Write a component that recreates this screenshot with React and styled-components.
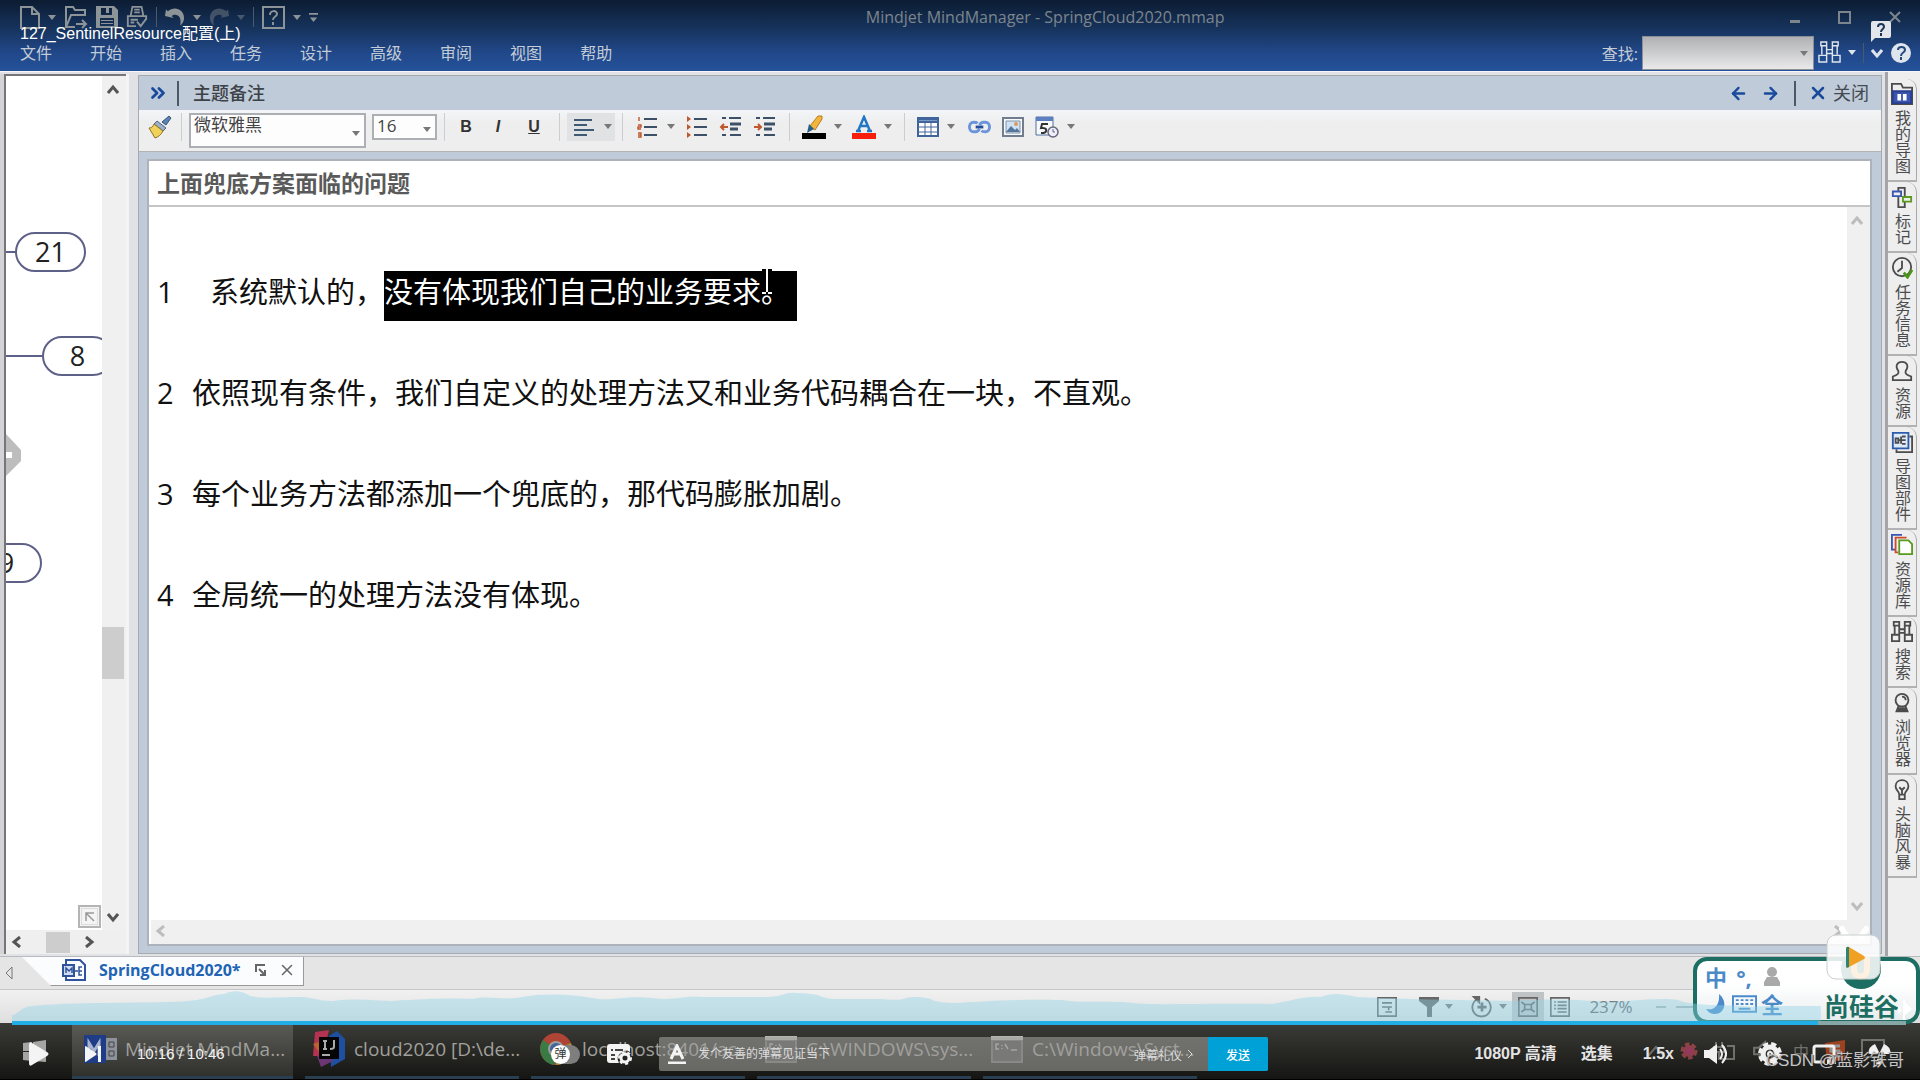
import React from 'react';
import styled, { createGlobalStyle, css } from 'styled-components';
import { ArrowLeft, ArrowRight, ChevronsRight, X } from 'lucide-react';

const sans = '"Open Sans", "Noto Sans CJK SC", sans-serif';
const arial = '"Liberation Sans", "Noto Sans CJK SC", sans-serif';

const GlobalStyle = createGlobalStyle`
  *, *::before, *::after { box-sizing: border-box; }
  body { margin: 0; font-family: ${sans}; background: #000; }
  button, input, select { font: inherit; margin: 0; border-radius: 0; }
  button { background: none; border: none; padding: 0; color: inherit; display: flex; align-items: center; justify-content: center; }
  a { color: inherit; text-decoration: none; }
  svg { display: block; flex: none; }
  p, h1, h2 { margin: 0; font-weight: 400; }
`;

const Screen = styled.div`
  position: relative;
  display: flex;
  flex-direction: column;
  height: 100vh;
  overflow: hidden;
  background: #e9e9ea;
`;

const Caret = styled.span`
  flex: none;
  width: 0;
  height: 0;
  border: 4px solid transparent;
  border-top: 5px solid ${({ $color }) => $color || '#777'};
  border-bottom: 0;
`;

const Spacer = styled.div`
  flex: 1;
`;

/* header */

const Header = styled.header`
  position: relative;
  flex: none;
  height: 71px;
  padding: 0 8px 0 20px;
  background: linear-gradient(#0c1c32 0%, #16335c 40%, #21488a 75%, #24529a 100%);
  color: #c3ccd6;
`;

const TitleRow = styled.div`
  display: flex;
  align-items: center;
  height: 34px;
  color: #7d858c;
`;

const QuickTools = styled.div`
  flex: 5;
  display: flex;
  align-items: center;
  gap: 8px;
  color: #8d9498;
`;

const QuickDivider = styled.span`
  width: 1px;
  height: 20px;
  background: #4b596b;
`;

const AppTitle = styled.h1`
  font-size: 16px;
  line-height: 24px;
`;

const WindowButtons = styled.div`
  flex: 4;
  display: flex;
  justify-content: flex-end;
  align-items: center;
  gap: 38px;
  padding-right: 11px;
`;

const MenuRow = styled.div`
  display: flex;
  align-items: center;
  height: 37px;
`;

const Menu = styled.nav`
  display: flex;
  gap: 38px;
  font-size: 16px;
  line-height: 24px;
`;

const Search = styled.div`
  display: flex;
  align-items: center;
  gap: 4px;
  font-size: 16px;
`;

const SearchBox = styled.span`
  position: relative;
  display: flex;
  input {
    width: 172px;
    height: 34px;
    border: 1px solid #8a8f99;
    background: linear-gradient(#b0b1b3, #e9e9ea);
  }
  ${Caret} {
    position: absolute;
    right: 6px;
    top: 15px;
  }
`;

const HeaderTools = styled.div`
  display: flex;
  align-items: center;
  gap: 7px;
  margin-left: 4px;
  color: #dfe5ec;
`;

/* body */

const Body = styled.div`
  flex: 1;
  display: flex;
  min-height: 0;
  border-top: 1px solid #f7f7f7;
  background: #e1e2e5;
`;

const MapPane = styled.section`
  display: flex;
  flex-direction: column;
  flex: none;
  width: 129px;
  margin: 2px 9px 2px 0;
  border-left: 4px solid #d4d4d6;
  border-right: 3px solid #f4f4f5;
  background: #efefef;
`;

const MapMain = styled.div`
  flex: 1;
  display: flex;
  border-left: 2px solid #77757a;
  border-top: 2px solid #77757a;
`;

const MapCanvas = styled.div`
  position: relative;
  flex: 1;
  overflow: hidden;
  background: #fff;
`;

const Bubble = styled.div`
  position: absolute;
  left: ${({ $x }) => $x}px;
  top: ${({ $y }) => $y}px;
  width: 71px;
  height: 40px;
  border: 2px solid #5f6088;
  border-radius: 20px;
  background: #fff;
  color: #222;
  font-size: 27px;
  line-height: 35px;
  text-align: center;
  &::before {
    content: '';
    position: absolute;
    right: 100%;
    top: 17px;
    width: 40px;
    height: 2px;
    background: #5f6088;
  }
`;

const MapHandle = styled.svg`
  position: absolute;
  left: 0;
  top: 358px;
`;

const FitButton = styled.button`
  position: absolute;
  right: 1px;
  bottom: 2px;
  width: 23px;
  height: 23px;
  border: 2px solid #b4b4b4;
  outline: 1px solid #dcdcdc;
  outline-offset: -4px;
  background: #f4f4f4;
  color: #999;
`;

const VScroll = styled.div`
  display: flex;
  flex-direction: column;
  align-items: center;
  width: ${({ $w }) => $w}px;
  padding: ${({ $pad }) => $pad || '8px 0'};
  background: #f0f0f0;
  color: ${({ $muted }) => ($muted ? '#bdbdbd' : '#555')};
`;

const VThumb = styled.div`
  width: 22px;
  height: 52px;
  margin-top: auto;
  margin-bottom: 232px;
  background: #cdcdcd;
`;

const MapHScroll = styled.div`
  display: flex;
  align-items: center;
  gap: 23px;
  height: 24px;
  padding-left: 5px;
  border-left: 2px solid #77757a;
  color: #555;
  i {
    width: 24px;
    height: 21px;
    margin-right: -10px;
    background: #cdcdcd;
  }
`;

const NotesPanel = styled.section`
  flex: 1;
  min-width: 0;
  display: flex;
  flex-direction: column;
  margin: 3px 3px 2px 0;
  border: 1px solid #a6a9ae;
  background: #bfcbd8;
`;

const PanelHead = styled.div`
  display: flex;
  align-items: center;
  height: 34px;
  padding: 0 12px 0 8px;
  color: #1a4a9c;
`;

const PanelTitle = styled.h2`
  font-size: 18px;
  line-height: 26px;
  font-weight: 500;
  color: #3d4248;
`;

const HeadRule = styled.span`
  width: 2px;
  height: 25px;
  margin: 0 ${({ $after }) => $after}px 0 8px;
  background: #4e5863;
`;

const CloseButton = styled.button`
  gap: 5px;
  font-size: 18px;
  line-height: 26px;
  span {
    color: #444a52;
  }
`;

const NavButton = styled.button`
  width: 32px;
`;

const Toolbar = styled.div`
  display: flex;
  align-items: center;
  height: 42px;
  padding-left: 7px;
  padding-bottom: 8px;
  border-bottom: 1px solid #b1b3b6;
  background: linear-gradient(#f3f5f8, #eee 30%);
`;

const ToolRule = styled.span`
  width: 1px;
  height: 28px;
  margin: 0 7px;
  background: #cbcdd0;
`;

const ToolButton = styled.button`
  width: ${({ $w }) => $w || 34}px;
  height: 26px;
  color: #333;
  font: bold 16px/22px ${arial};
`;

const DropButton = styled.button`
  gap: 8px;
  justify-content: flex-start;
  width: 50px;
  height: 28px;
  padding-left: 5px;
  ${({ $active }) => $active && css`
    width: 48px;
    background: #e0e2e4;
  `}
`;

const Combo = styled.span`
  position: relative;
  align-self: flex-start;
  display: flex;
  margin-top: ${({ $top }) => $top}px;
  margin-right: ${({ $gap }) => $gap || 0}px;
  select {
    appearance: none;
    width: ${({ $w }) => $w}px;
    height: ${({ $h }) => $h}px;
    padding: 0 0 ${({ $lift }) => $lift || 0}px 3px;
    border: 2px solid #acafb4;
    background: #fdfdfd;
    color: #444;
    font-size: 17px;
    line-height: 20px;
  }
  ${Caret} {
    position: absolute;
    right: 6px;
    top: 50%;
  }
`;

const Editor = styled.div`
  flex: 1;
  display: flex;
  flex-direction: column;
  min-height: 0;
  margin: 7px 9px 7px 8px;
  border: 2px solid #aeb2ba;
  background: #fff;
`;

const NoteTitle = styled.h2`
  height: 46px;
  padding-left: 8px;
  border-bottom: 2px solid #c6c6c8;
  color: #5a5a5a;
  font-size: 23px;
  font-weight: 700;
  line-height: 44px;
`;

const EditorMain = styled.div`
  flex: 1;
  display: flex;
  margin-left: 2px;
`;

const NoteText = styled.div`
  flex: 1;
  display: flex;
  flex-direction: column;
  gap: 51px;
  padding: 64px 0 0 6px;
  color: #111;
  font-size: 29px;
  line-height: 41px;
`;

const NoteLine = styled.p`
  display: flex;
  height: 50px;
`;

const LineNumber = styled.span`
  width: ${({ $wide }) => ($wide ? 53 : 35)}px;
`;

const Selected = styled.mark`
  position: relative;
  height: 50px;
  padding-right: 7px;
  background: #000;
  color: #fff;
  svg {
    position: absolute;
    right: 24px;
    top: -2px;
  }
`;

const HScroll = styled.div`
  display: flex;
  justify-content: space-between;
  align-items: center;
  height: 24px;
  margin-left: 2px;
  padding: 0 26px 2px 4px;
  background: #f0f0f0;
  color: #bdbdbd;
`;

const SideTabs = styled.aside`
  flex: none;
  width: 35px;
  padding: 7px 3px 0 0;
  border-left: 3px solid #a5a5a9;
  background: #eeeeef;
`;

const SideTab = styled.button`
  width: 29px;
  flex-direction: column;
  justify-content: flex-start;
  gap: 5px;
  padding: 4px 0 6px;
  border-right: 1px solid #aaa;
  border-bottom: 2px solid #b2b2b4;
  border-top-right-radius: 10px;
  color: #4c4c4c;
  font-size: 16px;
  line-height: 20px;
  span {
    writing-mode: vertical-rl;
  }
`;

/* bottom of the app */

const FileTabs = styled.div`
  flex: none;
  display: flex;
  align-items: flex-start;
  height: 34px;
  padding-left: 6px;
  border-bottom: 1px solid #c6c6c8;
  border-top: 1px solid #b9babd;
  background: #e5e5e6;
  color: #777;
`;

const FileTab = styled.div`
  display: flex;
  align-items: center;
  height: 29px;
  width: 282px;
  margin-left: 4px;
  padding: 0 3px 3px 40px;
  background: #fbfcfd;
  border-right: 1px solid #999;
  border-bottom: 1px solid #999;
  clip-path: polygon(0 0, 100% 0, 100% 100%, 29px 100%);
  font-size: 16px;
  line-height: 24px;
  font-weight: 700;
  color: #2163b5;
  a {
    flex: 1;
    margin-left: 13px;
  }
  button {
    width: 26px;
    color: #666;
  }
`;

const StatusBar = styled.footer`
  flex: none;
  display: flex;
  align-items: center;
  justify-content: flex-end;
  height: 33px;
  padding-right: 220px;
  background: linear-gradient(#f1f1f1, #dedede);
  color: #666;
  font-size: 17px;
  line-height: 24px;
`;

const StatusItem = styled.button`
  gap: 6px;
  width: ${({ $w }) => $w || 32}px;
  height: 30px;
  background: ${({ $on }) => ($on ? '#c0c3c5' : 'none')};
`;

const ZoomTrack = styled.span`
  width: ${({ $w }) => $w}px;
  height: 2px;
  margin-left: 10px;
  background: #a9b3b7;
`;

const Taskbar = styled.div`
  flex: none;
  display: flex;
  gap: 12px;
  height: 57px;
  border-bottom: 1px solid #000;
  background: linear-gradient(#3b3b37, #151513);
  color: #a0a09c;
`;

const StartButton = styled.button`
  width: 60px;
  padding-left: 8px;
`;

const Task = styled.a`
  display: flex;
  align-items: center;
  gap: 9px;
  width: 214px;
  margin-top: 2px;
  padding: 0 0 3px 8px;
  border-bottom: 3px solid #2a3f52;
  font-size: 19px;
  line-height: 26px;
  white-space: nowrap;
  ${({ $active }) => $active && css`
    width: 221px;
    padding-left: 12px;
    gap: 7px;
    background: linear-gradient(#5a5a55, #30302d);
  `}
`;

const Tray = styled.div`
  display: flex;
  align-items: center;
  gap: 15px;
  margin-left: auto;
  padding-right: 35px;
  opacity: 0.6;
`;

/* input method bar with the logo */

const ImeBar = styled.div`
  position: absolute;
  right: 0;
  bottom: 56px;
  display: flex;
  justify-content: space-between;
  width: 227px;
  height: 67px;
  padding: 2px 17px 0 5px;
  border: 4px solid #1c6e62;
  border-radius: 14px;
  background: linear-gradient(#fff, #fff 40%, #e9edee);
`;

const ImeKeys = styled.div`
  display: grid;
  grid-template-columns: repeat(3, 28px);
  grid-auto-rows: 27px;
  align-items: center;
  justify-items: center;
  color: #4a8ac9;
  font-size: 22px;
  line-height: 26px;
  font-weight: 700;
`;

const Brand = styled.div`
  display: flex;
  flex-direction: column;
  align-items: center;
  margin-top: -6px;
  color: #1c6e62;
  font-size: 25px;
  line-height: 30px;
  font-weight: 700;
`;

/* video player laid over the recording */

const VideoTitle = styled.div`
  position: absolute;
  left: 20px;
  top: 23px;
  color: #fff;
  font: 16px/22px ${arial};
`;

const Feedback = styled.button`
  position: absolute;
  right: 29px;
  top: 21px;
`;

const TvPlay = styled.button`
  position: absolute;
  right: 38px;
  bottom: 100px;
`;

const Progress = styled.div`
  position: absolute;
  left: 12px;
  right: 14px;
  bottom: 55px;
`;

const Track = styled.div`
  height: 4px;
  background: #86a7a5;
  i {
    display: block;
    height: 4px;
    background: #21ade5;
  }
`;

const Wave = styled.svg`
  width: 95.5%;
  height: 30px;
`;

const Knob = styled.svg`
  position: absolute;
  right: -6px;
  bottom: 3px;
`;

const Controls = styled.div`
  position: absolute;
  left: 0;
  right: 0;
  bottom: 0;
  display: grid;
  grid-template-columns: 551px 717px 1fr;
  align-items: center;
  height: 52px;
  color: #f4f4f4;
  font-family: ${arial};
`;

const Left = styled.div`
  display: flex;
  align-items: center;
  gap: 36px;
  padding-left: 29px;
  font-size: 15px;
  line-height: 20px;
`;

const Middle = styled.div`
  display: flex;
  align-items: center;
  gap: 27px;
`;

const Right = styled.div`
  display: flex;
  align-items: center;
  justify-content: flex-end;
  gap: 30px;
  padding-right: 28px;
  color: #f0f0f0;
`;

const TextButtons = styled.div`
  display: flex;
  gap: 24px;
  font-size: 16px;
  line-height: 22px;
  font-weight: 700;
  color: #e4e4e4;
`;

const Switch = styled.label`
  position: relative;
  display: flex;
  width: 29px;
  height: 19px;
  input {
    appearance: none;
    width: 29px;
    height: 19px;
    border-radius: 10px;
    background: #7e7e7e;
  }
  span {
    position: absolute;
    left: 0;
    top: 0;
    width: 19px;
    height: 19px;
    border-radius: 50%;
    background: #fff;
    color: #333;
    font-size: 12px;
    line-height: 18px;
    text-align: center;
  }
`;

const Danmaku = styled.form`
  flex: 1;
  display: flex;
  align-items: center;
  height: 34px;
  border-radius: 2px;
  overflow: hidden;
  background: rgba(160, 160, 157, 0.58);
  font-size: 12px;
  input {
    flex: 1;
    min-width: 0;
    height: 34px;
    padding: 0 0 0 9px;
    border: none;
    background: none;
    &::placeholder {
      color: #dcdcdc;
    }
  }
  a {
    display: flex;
    align-items: center;
    gap: 5px;
    margin-right: 15px;
    color: #dcdcdc;
  }
`;

const SendButton = styled.button`
  width: 60px;
  height: 34px;
  background: #00a1d6;
  color: #fff;
  font-weight: 500;
`;

const Watermark = styled.div`
  position: absolute;
  right: 16px;
  bottom: 6px;
  color: #c4c4c4;
  font: 17px/26px ${arial};
  text-shadow: 1px 1px 1px #222;
`;

const Line = ({ size = 22, w = 2, children, ...rest }) => (
  <svg width={size} height={size} viewBox="0 0 24 24" fill="none" stroke="currentColor" strokeWidth={w} {...rest}>
    {children}
  </svg>
);

const Angle = ({ dir }) => {
  const paths = {
    up: 'M1 9 6 3l5 6',
    down: 'M1 3l5 6 5-6',
    left: 'M9 1 3 6l6 5',
    right: 'M3 1l6 5-6 5',
  };
  return (
    <svg width="12" height="12" viewBox="0 0 12 12" fill="none" stroke="currentColor" strokeWidth="3">
      <path d={paths[dir]} />
    </svg>
  );
};

const Binoculars = ({ size = 23, w = 2 }) => (
  <Line size={size} w={w}>
    <path d="M3 1h6v4H3zM15 1h6v4h-6zM4 5v9M9 5v17H1v-7h8M20 5v9M15 5v17h8v-7h-8M9 9h6M9 13h6" />
  </Line>
);

const ListIcon = ({ kind }) => (
  <svg width="24" height="24" viewBox="0 0 24 24">
    <g stroke="#3c5068" strokeWidth="2">
      <path d={kind === 'out' || kind === 'in' ? 'M3 3h4M10 3h12M11 20h11M3 20h4' : 'M9 4h13M9 12h13M9 20h13'} />
      {(kind === 'out' || kind === 'in') && <path d="M11 9h11M11 14h8" strokeWidth="3" />}
    </g>
    {kind === 'number' && <path d="M4 2v4M3 10h3v2H3v2h3M3 18h3v4H3M3 20h3" stroke="#c0562c" strokeWidth="1.4" fill="none" />}
    {kind === 'bullet' && <path d="M2 1l4 3-4 3zM2 9l4 3-4 3zM2 17l4 3-4 3z" fill="#c0562c" />}
    {kind === 'out' && <path d="M9 12H2m3-3-3 3 3 3" stroke="#c0562c" strokeWidth="2" fill="none" />}
    {kind === 'in' && <path d="M1 12h7m-3-3 3 3-3 3" stroke="#c0562c" strokeWidth="2" fill="none" />}
  </svg>
);

const CmdIcon = () => (
  <svg width="32" height="27" viewBox="0 0 32 27">
    <path fill="#6a6a68" d="M0 0h32v27H0z" />
    <path fill="#b5b5b3" d="M0 0h32v4H0z" />
    <path fill="#444443" d="M2 5h28v20H2z" />
    <path d="M8 8H5v5h3M11 9v1M11 12v1M14 8l3 5M20 14h6" stroke="#aaa" strokeWidth="1.5" fill="none" />
  </svg>
);

const QuickIcons = () => (
  <QuickTools>
    <svg width="20" height="24" viewBox="0 0 20 24" fill="none" stroke="currentColor" strokeWidth="2">
      <path d="M1 2h11l7 7v14H1zM12 2v7h7" />
    </svg>
    <Caret $color="#8d9498" />
    <svg width="24" height="24" viewBox="0 0 24 24" fill="none" stroke="currentColor" strokeWidth="2">
      <path d="M2 22V2h7l2 3h10v5H7L2 22h9M12 19h10m-4-4 4 4-4 4" />
    </svg>
    <svg width="22" height="22" viewBox="0 0 22 22">
      <path fill="currentColor" fillRule="evenodd" d="M0 0h18l4 4v18H0zM5 2v7h11V2h-3v5h-3V2zM4 12v8h14v-8zM5 14h12v1H5zm0 3h12v1H5z" />
    </svg>
    <svg width="22" height="24" viewBox="0 0 24 24" fill="none" stroke="currentColor" strokeWidth="2">
      <path d="M5 11 7 1h10l2 10M9 4h6M9 7h6M11 22H2V11h20v4M5 15h8M5 18h4M12 17l4 5 6-8" />
    </svg>
    <QuickDivider />
    <svg width="20" height="18" viewBox="0 0 21 18">
      <path fill="currentColor" d="M0 8 1 1l2 2c7-6 17-2 17 7 0 4-2 6-4 8 1-6 0-10-4-11-2-1-4 0-5 1l2 2z" />
    </svg>
    <Caret $color="#8d9498" />
    <svg width="20" height="18" viewBox="0 0 21 18" opacity="0.4">
      <path fill="currentColor" d="M21 8 20 1l-2 2C11-3 1 1 1 10c0 4 2 6 4 8-1-6 0-10 4-11 2-1 4 0 5 1l-2 2z" />
    </svg>
    <Caret $color="#48586c" />
    <QuickDivider />
    <svg width="23" height="23" viewBox="0 0 23 23" fill="none" stroke="currentColor" strokeWidth="2">
      <path d="M1 1h21v21H1zM8 9c0-5 7-5 7-1 0 3-4 2-4 6M11 16v3" />
    </svg>
    <Caret $color="#8d9498" />
    <svg width="9" height="11" viewBox="0 0 10 12" fill="currentColor">
      <path d="M0 1h10v2H0zM1 6h8l-4 5z" />
    </svg>
  </QuickTools>
);

const menuItems = ['文件', '开始', '插入', '任务', '设计', '高级', '审阅', '视图', '帮助'];

const sideTabs = [
  {
    label: '我的导图',
    icon: (
      <Line>
        <path d="M1 23V1h10l2 4h10v18z" />
        <path d="M2 9h20v13H2z" fill="#3a56b0" stroke="#2a3f8d" />
        <path d="M7 12h4v7H7zM13 12h4v7h-4z" fill="#fff" stroke="none" />
      </Line>
    ),
  },
  {
    label: '标记',
    icon: (
      <Line>
        <path d="M8 2h7v21H8z" />
        <path d="M2 6h9v5H2z" fill="#eee" stroke="#3a56b0" />
        <path d="M13 12h9v5h-9z" fill="#eee" stroke="#5a9b1f" />
      </Line>
    ),
  },
  {
    label: '任务信息',
    icon: (
      <Line>
        <circle cx="12" cy="11" r="10" />
        <path d="M12 4v8l-5 4" />
        <path d="m14 17 4 5 5-8" stroke="#4a9416" strokeWidth="3" />
      </Line>
    ),
  },
  {
    label: '资源',
    icon: (
      <Line>
        <path d="M2 22v-4c5-2 7-3 6-6C4 6 7 2 12 2s8 4 4 10c-1 3 1 4 6 6v4z" />
      </Line>
    ),
  },
  {
    label: '导图部件',
    icon: (
      <Line>
        <path d="M20 6h3v17H6v-3" />
        <path d="M2 2h17v17H2z" fill="#dfeaf8" stroke="#2c5cab" />
        <path d="M5 8h3v5H5zM12 6h4M12 10h4M12 14h4M8 10h4M11 6v8" />
      </Line>
    ),
  },
  {
    label: '资源库',
    icon: (
      <Line>
        <path d="M5 17H1V1h11" stroke="#3a56b0" />
        <path d="M8 20H5V4h12" stroke="#d0492c" />
        <path d="M9 7h10l4 4v11H9z" fill="#fff" stroke="#5a9b1f" />
      </Line>
    ),
  },
  { label: '搜索', icon: <Binoculars size={22} /> },
  {
    label: '浏览器',
    icon: (
      <Line>
        <circle cx="12" cy="9" r="7" />
        <path d="M12 5c2 0 4 1 4 4M8 16h8l2 5H6z" />
        <path d="M7 19h10" strokeWidth="4" />
      </Line>
    ),
  },
  {
    label: '头脑风暴',
    icon: (
      <Line>
        <path d="M9 17c0-4-4-4-4-9 0-9 14-9 14 0 0 5-4 5-4 9zM9 17v5h6v-5M9 9l3 3 3-3M12 12v5" />
      </Line>
    ),
  },
];

const notes = [
  { text: '系统默认的，', selected: '没有体现我们自己的业务要求。' },
  { text: '依照现有条件，我们自定义的处理方法又和业务代码耦合在一块，不直观。' },
  { text: '每个业务方法都添加一个兜底的，那代码膨胀加剧。' },
  { text: '全局统一的处理方法没有体现。' },
];

const NotesToolbar = () => (
  <Toolbar>
    <ToolButton $w={28} aria-label="格式刷">
      <svg width="24" height="24" viewBox="0 0 24 24">
        <path d="M21 1l2 2-5 7-4-3z" fill="#5b82b5" stroke="#38557d" />
        <path d="M9 6l9 7-3 3-9-7z" fill="#9bb0c8" stroke="#4e6583" />
        <path d="M6 9l9 7c-2 4-5 6-8 7L1 13c2 0 4-1 5-4z" fill="#efd15c" stroke="#8f7222" />
      </svg>
    </ToolButton>
    <ToolRule />
    <Combo $w={177} $h={35} $top={3} $gap={6} $lift={12}>
      <select aria-label="字体" defaultValue="微软雅黑">
        <option>微软雅黑</option>
      </select>
      <Caret />
    </Combo>
    <Combo $w={65} $h={26} $top={4} $lift={2}>
      <select aria-label="字号" defaultValue="16">
        <option>16</option>
      </select>
      <Caret />
    </Combo>
    <ToolRule />
    <ToolButton $w={28}>B</ToolButton>
    <ToolButton $w={36}><i>I</i></ToolButton>
    <ToolButton $w={36}><u>U</u></ToolButton>
    <ToolRule />
    <DropButton $active aria-label="对齐">
      <svg width="24" height="24" viewBox="0 0 24 24" stroke="#3f5a74" strokeWidth="2">
        <path d="M2 5h18M2 10h13M2 15h20M2 20h13" />
      </svg>
      <Caret />
    </DropButton>
    <ToolRule />
    <DropButton aria-label="编号"><ListIcon kind="number" /><Caret /></DropButton>
    <ToolButton aria-label="项目符号"><ListIcon kind="bullet" /></ToolButton>
    <ToolButton aria-label="减少缩进"><ListIcon kind="out" /></ToolButton>
    <ToolButton aria-label="增加缩进"><ListIcon kind="in" /></ToolButton>
    <ToolRule />
    <DropButton aria-label="突出显示">
      <svg width="24" height="24" viewBox="0 0 24 24">
        <path d="M16 1h4v3l-7 11-5-4z" fill="#f3b53c" stroke="#b87c1c" />
        <path d="M7 9l5 5-7 4z" fill="#27608c" />
        <path d="M0 18h24v6H0z" />
      </svg>
      <Caret />
    </DropButton>
    <DropButton aria-label="字体颜色">
      <svg width="24" height="24" viewBox="0 0 24 24">
        <path d="M6 16 12 2l6 14M8 11h8M4 16h5M15 16h5" fill="none" stroke="#2277c4" strokeWidth="2.5" />
        <path d="M0 18h24v6H0z" fill="#f7200c" />
      </svg>
      <Caret />
    </DropButton>
    <ToolRule />
    <DropButton aria-label="表格">
      <svg width="22" height="20" viewBox="0 0 22 20" fill="#fff" stroke="#40649c" strokeWidth="2">
        <path d="M1 1h20v18H1z" />
        <path d="M1 2h20v3H1z" fill="#7c9bcb" />
        <path d="M8 6v13M14 6v13M1 10h20M1 15h20" strokeWidth="1" />
      </svg>
      <Caret />
    </DropButton>
    <ToolButton aria-label="链接">
      <svg width="23" height="14" viewBox="0 0 24 14" fill="none" strokeWidth="3">
        <path d="M10 3C9 2 7 2 6 2 0 2 0 12 6 12h2c2 0 3-1 4-3M14 11c1 1 3 1 4 1 6 0 6-10 0-10h-2c-2 0-3 1-4 3" stroke="#6a94dc" />
        <path d="M8 7h8" stroke="#254f9c" />
      </svg>
    </ToolButton>
    <ToolButton aria-label="图片">
      <svg width="22" height="20" viewBox="0 0 22 20">
        <path d="M1 1h20v18H1z" fill="#f7f9fb" stroke="#717d8c" strokeWidth="2" />
        <path d="M4 4h14v12H4z" fill="#cfe2f4" stroke="#8292a6" />
        <circle cx="14" cy="7" r="2" fill="#d99a55" />
        <path d="M4 15l5-6 4 4 2-2 3 4z" fill="#54759c" />
      </svg>
    </ToolButton>
    <DropButton aria-label="日期">
      <svg width="24" height="22" viewBox="0 0 24 22">
        <path d="M1 1h17v18H1z" fill="#f7f9fb" stroke="#5170a4" />
        <path d="M1 1h17v4H1z" fill="#5b7fc0" />
        <path d="M13 8H7l-1 4c7-1 7 5 0 5" fill="none" stroke="#333" strokeWidth="2" />
        <circle cx="18" cy="16" r="5" fill="#eef" stroke="#667" strokeWidth="1.5" />
        <path d="M18 13v3h2" fill="none" stroke="#667" />
      </svg>
      <Caret />
    </DropButton>
  </Toolbar>
);

const wavePath =
  'M0 30V24C6 24 8 16 20 15C60 11 130 12 155 11C200 10 195 4 212 3C220 -1 230 -1 238 5C250 8 270 6 290 6C300 6 305 10 320 10C345 7 350 9 380 10C415 8 430 7 460 8C480 4 490 10 510 6C530 2 560 3 580 7C600 11 610 4 640 7C665 10 665 5 690 6H755C775 5 770 1 785 2C815 3 805 8 825 8H870C895 11 890 5 905 6C925 7 915 12 945 12C975 10 1000 8 1050 9C1070 12 1080 10 1110 11C1140 15 1180 12 1260 13C1280 10 1290 5 1308 6C1320 1 1330 3 1345 6C1390 8 1440 9 1500 10C1560 6 1580 12 1610 10C1640 8 1655 7 1665 9C1680 15 1710 14 1730 15C1745 17 1750 14 1765 15H1808V30Z';

const App = () => (
  <>
    <GlobalStyle />
    <Screen>
      <Header>
        <TitleRow>
          <QuickIcons />
          <AppTitle>Mindjet MindManager - SpringCloud2020.mmap</AppTitle>
          <WindowButtons>
            <button aria-label="最小化">
              <svg width="10" height="12" viewBox="0 0 10 12"><path d="M0 9h10v3H0z" fill="currentColor" /></svg>
            </button>
            <button aria-label="最大化">
              <svg width="13" height="13" viewBox="0 0 13 13" fill="none" stroke="currentColor" strokeWidth="2"><path d="M1 1h11v11H1z" /></svg>
            </button>
            <button aria-label="关闭窗口">
              <svg width="12" height="12" viewBox="0 0 12 12" stroke="currentColor" strokeWidth="2"><path d="M1 1l10 10M11 1 1 11" /></svg>
            </button>
          </WindowButtons>
        </TitleRow>
        <MenuRow>
          <Menu>
            {menuItems.map((item) => <a href="#menu" key={item}>{item}</a>)}
          </Menu>
          <Spacer />
          <Search>
            <label htmlFor="find">查找:</label>
            <SearchBox>
              <input id="find" />
              <Caret />
            </SearchBox>
          </Search>
          <HeaderTools>
            <Binoculars w={1.5} />
            <Caret $color="#dfe5ec" />
            <QuickDivider />
            <Angle dir="down" />
            <svg width="22" height="22" viewBox="0 0 22 22">
              <circle cx="11" cy="11" r="10" fill="#dfe5ec" />
              <path d="M8 8c0-4 7-4 7 0 0 3-4 2-4 6M11 15v3" fill="none" stroke="#23477f" strokeWidth="2" />
            </svg>
          </HeaderTools>
        </MenuRow>
      </Header>

      <Body>
        <MapPane>
          <MapMain>
            <MapCanvas>
              <Bubble $x={9} $y={156}>21</Bubble>
              <Bubble $x={36} $y={260}>8</Bubble>
              <Bubble $x={-35} $y={467}>9</Bubble>
              <MapHandle width="16" height="42" viewBox="0 0 16 42">
                <path d="M0 0 15 16v11L0 42z" fill="#bdbdbd" />
                <path d="M0 18h6v6H0z" fill="#fff" />
              </MapHandle>
              <FitButton aria-label="适应窗口">
                <Line size={12} w={3}><path d="M4 20V4h16M4 4l16 16" /></Line>
              </FitButton>
            </MapCanvas>
            <VScroll $w={24} $pad="8px 2px 7px 0">
              <Angle dir="up" />
              <VThumb />
              <Angle dir="down" />
            </VScroll>
          </MapMain>
          <MapHScroll>
            <Angle dir="left" />
            <i />
            <Angle dir="right" />
          </MapHScroll>
        </MapPane>

        <NotesPanel>
          <PanelHead>
            <ChevronsRight size={22} strokeWidth={3} />
            <HeadRule $after={14} />
            <PanelTitle>主题备注</PanelTitle>
            <Spacer />
            <NavButton aria-label="上一个"><ArrowLeft size={19} strokeWidth={3} /></NavButton>
            <NavButton aria-label="下一个"><ArrowRight size={19} strokeWidth={3} /></NavButton>
            <HeadRule $after={12} />
            <CloseButton><X size={20} strokeWidth={3} /><span>关闭</span></CloseButton>
          </PanelHead>
          <NotesToolbar />
          <Editor>
            <NoteTitle>上面兜底方案面临的问题</NoteTitle>
            <EditorMain>
              <NoteText>
                {notes.map((note, i) => (
                  <NoteLine key={note.text}>
                    <LineNumber $wide={!!note.selected}>{i + 1}</LineNumber>
                    {note.text}
                    {note.selected && (
                      <Selected>
                        {note.selected}
                        <svg width="12" height="26" viewBox="0 0 12 26" fill="none" strokeWidth="2">
                          <path d="M1 1h4M7 1h4" stroke="#000" />
                          <path d="M6 2v21M1 24h4M7 24h4" stroke="#fff" />
                        </svg>
                      </Selected>
                    )}
                  </NoteLine>
                ))}
              </NoteText>
              <VScroll $w={23} $pad="8px 3px 8px 0" $muted>
                <Angle dir="up" />
                <Spacer />
                <Angle dir="down" />
              </VScroll>
            </EditorMain>
            <HScroll>
              <Angle dir="left" />
              <Angle dir="right" />
            </HScroll>
          </Editor>
        </NotesPanel>

        <SideTabs>
          {sideTabs.map(({ label, icon }) => (
            <SideTab key={label}>
              {icon}
              <span>{label}</span>
            </SideTab>
          ))}
        </SideTabs>
      </Body>

      <FileTabs>
        <svg width="12" height="28" viewBox="0 0 12 28" fill="none" stroke="currentColor"><path d="M6 10v12l-6-6z" /></svg>
        <FileTab>
          <svg width="24" height="22" viewBox="0 0 24 22" fill="none" stroke="#31539b" strokeWidth="2">
            <path d="M4 6V1h14l5 5v15H4v-4" />
            <path d="M1 6h11v11H1z" fill="#cfdcf2" />
            <path d="M4 14V9l3 3 3-3v5M12 12h4M20 8h-3v8h3M17 12h3" strokeWidth="1.5" />
          </svg>
          <a href="#map">SpringCloud2020*</a>
          <button aria-label="还原">
            <svg width="12" height="12" viewBox="0 0 12 12" fill="none" stroke="currentColor" strokeWidth="2"><path d="M1 8V1h9M4 5l6 6M10 6v5H5" /></svg>
          </button>
          <button aria-label="关闭文件"><X size={18} /></button>
        </FileTab>
      </FileTabs>
      <StatusBar>
        <StatusItem $w={38} aria-label="备注"><Line size={20}><path d="M1 1h22v22H1zM6 7h12M6 12h8v4M10 18h8M14 12h4" /></Line></StatusItem>
        <StatusItem $w={60} aria-label="筛选">
          <svg width="20" height="20" viewBox="0 0 20 20"><path d="M0 0h20v4l-7 6v10H8V10L0 4z" fill="currentColor" /></svg>
          <Caret />
        </StatusItem>
        <StatusItem $w={46} aria-label="添加">
          <Line>
            <path d="M12 7v10M7 12h10" strokeWidth="3" />
            <path d="M15 3a10 10 0 1 1-7 0" />
            <path d="M3 1h6v6z" fill="currentColor" />
          </Line>
          <Caret />
        </StatusItem>
        <StatusItem $on aria-label="适合">
          <Line size={20}><path d="M1 1h22v22H1zM8 9h8v6H8zM4 6l4 3M20 6l-4 3M4 18l4-3M20 18l-4-3" /></Line>
        </StatusItem>
        <StatusItem aria-label="大纲"><Line size={20}><path d="M1 1h22v22H1zM5 6h2M9 6h11M5 10h2M9 10h11M5 14h2M9 14h11M9 18h11" /></Line></StatusItem>
        <StatusItem $w={70}>237%</StatusItem>
        <ZoomTrack $w={10} />
        <ZoomTrack $w={24} />
      </StatusBar>

      <Taskbar>
        <StartButton aria-label="开始菜单">
          <svg width="23" height="22" viewBox="0 0 23 22" fill="#a5a5a3"><path d="M0 3l9-1v9H0zM10 2l13-2v11H10zM0 12h9v9l-9-1zM10 12h13v10l-13-1z" /></svg>
        </StartButton>
        <Task href="#mindjet" $active>
          <svg width="34" height="30" viewBox="0 0 34 30">
            <path d="M0 1h22v28H0z" fill="#1f3c86" />
            <path d="M22 4h11v22H22z" fill="#8d929b" />
            <path d="M5 22V9l5 8 5-8v13" fill="none" stroke="#a9b4cf" strokeWidth="3" />
            <path d="M25 8h5v5h-5zM25 17h5v5h-5z" fill="none" stroke="#444" />
          </svg>
          Mindjet MindMa...
        </Task>
        <Task href="#idea">
          <svg width="32" height="38" viewBox="0 0 32 38">
            <path d="M2 2 16 0l-6 26H0z" fill="#b33350" />
            <path d="M16 6l8-5 8 8v20l-14 8z" fill="#1f4fa0" />
            <path d="M4 26l12-2 4 7-12 6z" fill="#6b3772" />
            <path d="M0 14l6-2v10z" fill="#b9642d" />
            <path d="M6 7h20v22H6z" fill="#050505" />
            <path d="M10 11h4M12 11v8M10 19h4M21 10v7q0 2-4 2M9 25h8" stroke="#aaa" strokeWidth="2" fill="none" />
          </svg>
          cloud2020 [D:\de...
        </Task>
        <Task href="#chrome">
          <svg width="34" height="34" viewBox="0 0 34 34" opacity="0.8">
            <circle cx="17" cy="17" r="16" fill="#cf4a37" />
            <path d="M17 17 4 8a16 16 0 0 0 12 25z" fill="#3f8f4d" />
            <path d="M17 17v16a16 16 0 0 0 15-22z" fill="#caa63a" />
            <circle cx="17" cy="17" r="7" fill="#4a72b8" stroke="#bbb" strokeWidth="2" />
          </svg>
          localhost:8401/ac...
        </Task>
        <Task href="#cmd1"><CmdIcon />C:\WINDOWS\sys...</Task>
        <Task href="#cmd2"><CmdIcon />C:\Windows\Syst...</Task>
        <Tray>
          <svg width="18" height="12" viewBox="0 0 18 12" fill="none" stroke="#999" strokeWidth="2"><path d="M1 11l8-9 8 9" /></svg>
          <svg width="18" height="18" viewBox="0 0 18 18"><circle cx="9" cy="9" r="6" fill="#d48" stroke="#c55" strokeWidth="5" strokeDasharray="4 2" /></svg>
          <Line size={24}><path d="M3 3v5M9 3v5M1 8h10v5H1zM6 13v7h15V7h-7" /></Line>
          <Line size={26}><path d="M2 9h4l6-5v16l-6-5H2zM15 8q3 4 0 8M18 5q5 7 0 14" /></Line>
          <span>中</span>
          <svg width="22" height="22" viewBox="0 0 22 22"><path d="M1 3 21 0v20L3 22z" fill="#e8511c" /><path d="M16 6H7v5h8v5H5" fill="none" stroke="#ddd" strokeWidth="3" /></svg>
          <Line size={24}><path d="M1 1h22v17H1z" /></Line>
        </Tray>
      </Taskbar>

      <ImeBar>
        <ImeKeys>
          <span>中</span>
          <span>°,</span>
          <svg width="16" height="20" viewBox="0 0 16 20" fill="#a9a9a9"><circle cx="8" cy="5" r="5" /><path d="M3 10h10l3 5v4H0v-4z" /></svg>
          <svg width="20" height="20" viewBox="0 0 20 20" fill="currentColor"><path d="M13 0c9 7 6 20-4 20-4 0-7-2-9-5 9 2 14-5 13-15z" /></svg>
          <svg width="25" height="18" viewBox="0 0 26 18" fill="none" stroke="currentColor" strokeWidth="2">
            <path d="M1 1h24v16H1zM7 14h12" />
            <path d="M4 5h18M4 9h18" strokeDasharray="3 2" />
          </svg>
          <span>全</span>
        </ImeKeys>
        <Brand>
          <svg width="40" height="34" viewBox="0 0 40 34">
            <circle cx="20" cy="12" r="20" fill="#1c6e62" />
            <path d="M13 0v12c0 10 13 10 13 0V0" fill="none" stroke="#f0a030" strokeWidth="6" />
          </svg>
          <span>尚硅谷</span>
        </Brand>
      </ImeBar>

      <VideoTitle>127_SentinelResource配置(上)</VideoTitle>
      <Feedback aria-label="反馈">
        <svg width="20" height="21" viewBox="0 0 20 21">
          <path d="M2 0h16q2 0 2 2v13q0 2-2 2H4l-4 4V2q0-2 2-2z" fill="#e2e5ea" />
          <path d="M7 6c0-4 6-4 6 0 0 2-3 2-3 5M10 12v3" fill="none" stroke="#1b3358" strokeWidth="2" />
        </svg>
      </Feedback>
      <TvPlay aria-label="继续播放">
        <svg width="56" height="54" viewBox="0 0 56 54">
          <path d="M16 3l5 8M40 3l-5 8" stroke="#fff" strokeWidth="6" strokeLinecap="round" />
          <rect x="1" y="9" width="53" height="44" rx="9" fill="#fff" fillOpacity="0.86" stroke="#c9cfcf" />
          <path d="M23 21q-3-1-3 2v17q0 3 3 1l15-8q2-1 0-3z" fill="#f0a022" />
          <path d="M23 21q-3-1-3 2v17q0 3 3 1z" fill="#2e8277" />
        </svg>
      </TvPlay>

      <Progress>
        <Wave viewBox="0 0 1808 30" preserveAspectRatio="none">
          <path d={wavePath} fill="#8ed3ea" fillOpacity="0.42" />
        </Wave>
        <Track><i style={{ width: `${(616 / 646) * 100}%` }} /></Track>
        <Knob width="14" height="24" viewBox="0 0 14 24" fill="#fff">
          <path d="M5 2h2v20H5zM7 4l7 7-7 6zM0 8l4 4-4 4z" />
        </Knob>
      </Progress>

      <Controls>
        <Left>
          <button aria-label="播放">
            <svg width="20" height="24" viewBox="0 0 20 24" fill="currentColor"><path d="M3 1q-3-2-3 2v18q0 4 3 2l15-9q3-2 0-4z" /></svg>
          </button>
          <button aria-label="下一集">
            <svg width="16" height="16" viewBox="0 0 16 16" fill="currentColor"><path d="M0 1q0-2 2 0l9 6q1 1 0 2l-9 6q-2 2-2 0zM13 0h3v16h-3z" /></svg>
          </button>
          <span>10:16 / 10:46</span>
        </Left>
        <Middle>
          <Switch>
            <input type="checkbox" aria-label="弹幕" />
            <span>弹</span>
          </Switch>
          <button aria-label="弹幕设置">
            <svg width="25" height="22" viewBox="0 0 25 22">
              <path d="M3 1h17q3 0 3 3v5a8 8 0 0 0-11 11H3q-3 0-3-3V4q0-3 3-3z" fill="currentColor" />
              <path d="M4 7h2M8 7h8M4 12h4M4 16h4" stroke="#444" strokeWidth="2" />
              <circle cx="18" cy="15" r="4" fill="none" stroke="currentColor" strokeWidth="3" />
              <circle cx="18" cy="15" r="6" fill="none" stroke="currentColor" strokeWidth="2" strokeDasharray="3 3" />
            </svg>
          </button>
          <Danmaku>
            <svg width="30" height="20" viewBox="0 0 30 20" fill="none" stroke="currentColor" strokeWidth="2"><path d="M12 15 18 2l6 13M14 10h8M9 19h18" strokeWidth="3" /></svg>
            <input placeholder="发个友善的弹幕见证当下" aria-label="弹幕内容" />
            <a href="#etiquette">
              弹幕礼仪
              <svg width="6" height="10" viewBox="0 0 6 10" fill="none" stroke="currentColor"><path d="M1 1l4 4-4 4" /></svg>
            </a>
            <SendButton type="button">发送</SendButton>
          </Danmaku>
        </Middle>
        <Right>
          <TextButtons>
            <button>1080P 高清</button>
            <button>选集</button>
          </TextButtons>
          <TextButtons>
            <button>1.5x</button>
          </TextButtons>
          <button aria-label="音量">
            <svg width="24" height="22" viewBox="0 0 24 22"><path d="M0 7h5l8-6v20l-8-6H0z" fill="currentColor" /><path d="M16 6q4 5 0 10M18 2q8 9 0 18" fill="none" stroke="currentColor" strokeWidth="2" /></svg>
          </button>
          <button aria-label="设置">
            <svg width="24" height="24" viewBox="0 0 24 24" fill="none" stroke="currentColor"><circle cx="12" cy="12" r="7" strokeWidth="5" /><circle cx="12" cy="12" r="10" strokeWidth="4" strokeDasharray="5 3" /><circle cx="12" cy="12" r="2" strokeWidth="2" /></svg>
          </button>
          <button aria-label="画中画">
            <svg width="25" height="21" viewBox="0 0 25 21"><path d="M12 18H4q-2 0-2-2V4q0-2 2-2h16q2 0 2 2v7" fill="none" stroke="currentColor" strokeWidth="3" /><path d="M15 13h9v7h-9z" fill="currentColor" /></svg>
          </button>
          <button aria-label="全屏">
            <svg width="25" height="24" viewBox="0 0 25 24" fill="currentColor"><path d="M10 12H1Q2 4 8 2l4 8zM15 12h9Q23 4 17 2l-4 8zM12 14l5 7q-5 3-9 0z" /></svg>
          </button>
        </Right>
      </Controls>
      <Watermark>CSDN @蓝影铁哥</Watermark>
    </Screen>
  </>
);

export default App;
